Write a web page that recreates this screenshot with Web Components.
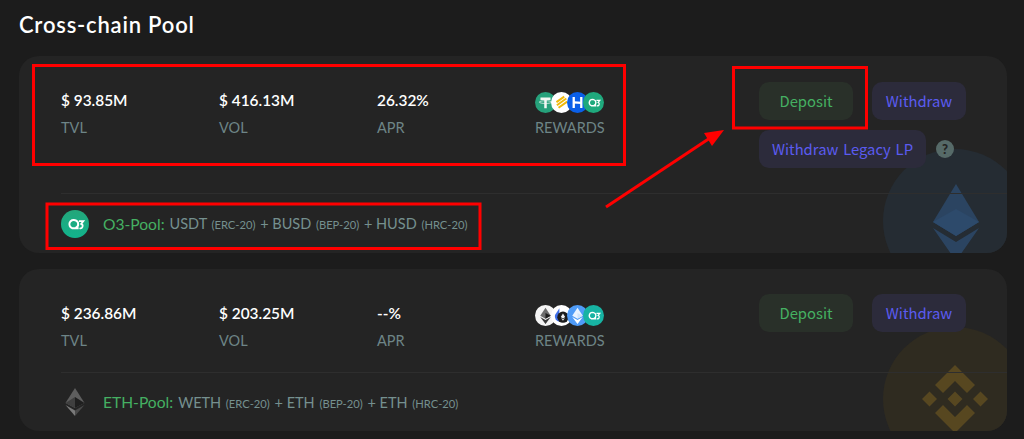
<!DOCTYPE html>
<html>
<head>
<meta charset="utf-8">
<title>Cross-chain Pool</title>
<style>
	html, body { margin: 0; padding: 0; background: #1c1c1c; }
	body { font-family: "Lato", "Noto Sans", sans-serif; width: 1024px; height: 439px; overflow: hidden; position: relative; }
</style>
</head>
<body>
<pool-page>
	<span slot="title">Cross-chain Pool</span>

	<pool-card watermark="eth">
		<pool-stat slot="stats" value="$ 93.85M" label="TVL"></pool-stat>
		<pool-stat slot="stats" value="$ 416.13M" label="VOL"></pool-stat>
		<pool-stat slot="stats" value="26.32%" label="APR"></pool-stat>
		<reward-stack slot="stats" tokens="usdt busd husd o3"></reward-stack>
		<action-button slot="actions" kind="deposit">Deposit</action-button>
		<action-button slot="actions" kind="withdraw">Withdraw</action-button>
		<action-button slot="actions" kind="withdraw">Withdraw Legacy LP</action-button>
		<help-mark slot="actions"></help-mark>
		<pool-name slot="footer" icon="o3" name="O3-Pool:" parts="USDT|ERC-20,BUSD|BEP-20,HUSD|HRC-20"></pool-name>
	</pool-card>

	<pool-card watermark="bnb">
		<pool-stat slot="stats" value="$ 236.86M" label="TVL"></pool-stat>
		<pool-stat slot="stats" value="$ 203.25M" label="VOL"></pool-stat>
		<pool-stat slot="stats" value="--%" label="APR"></pool-stat>
		<reward-stack slot="stats" tokens="eth lido weth o3teal"></reward-stack>
		<action-button slot="actions" kind="deposit">Deposit</action-button>
		<action-button slot="actions" kind="withdraw">Withdraw</action-button>
		<pool-name slot="footer" icon="ethgray" name="ETH-Pool:" parts="WETH|ERC-20,ETH|BEP-20,ETH|HRC-20"></pool-name>
	</pool-card>
</pool-page>
<red-markup></red-markup>

<script>
(function() {
	// shapes shared by the small round token icons, all on a 20x20 box
	const ethShape = (top, mid, low) => `
		<path d="M10 2.5 L15 10.2 L10 13 L5 10.2 Z" fill="${top}"/>
		<path d="M10 7.5 L15 10.2 L10 13 Z" fill="${mid}"/>
		<path d="M5 11.4 L10 14.2 L15 11.4 L10 18 Z" fill="${low}"/>`;

	const o3Shape = `
		<path d="M12.6 13 H7.9 A2.9 2.9 0 1 1 10.2 7.3 A2.9 2.9 0 0 1 10.4 12.8" fill="none" stroke="#fff" stroke-width="1.4"/>
		<path d="M12.8 7.9 H16 L14.4 9.9 A1.6 1.6 0 0 1 13.2 13" fill="none" stroke="#fff" stroke-width="1.2"/>`;

	const tokens = {
		usdt: `<circle cx="10" cy="10" r="10" fill="#26a17b"/>
			<path d="M5.2 5.2 H14.8 V7.6 H11.2 V15.5 H8.8 V7.6 H5.2 Z" fill="#f1f7f3"/>
			<ellipse cx="10" cy="9.6" rx="6" ry="1.3" fill="none" stroke="#f1f7f3" stroke-width=".7"/>`,
		busd: `<circle cx="10" cy="10" r="10" fill="#fff"/>
			<g stroke="#f0b90b" stroke-width="1.9" fill="none">
				<path d="M5.2 9.6 L12.6 4.4 M5.6 12.6 L14.6 6.2 M7.2 15 L15.4 9.2"/>
			</g>`,
		husd: `<circle cx="10" cy="10" r="10" fill="#0a5fe8"/>
			<path d="M6.4 4.8 V15.2 M13.6 4.8 V15.2" stroke="#fff" stroke-width="2.2" fill="none"/>
			<path d="M6.4 9.8 L13.6 10.4" stroke="#fff" stroke-width="2.2" fill="none"/>`,
		o3: `<circle cx="10" cy="10" r="10" fill="#1fa97d"/>${o3Shape}`,
		o3teal: `<circle cx="10" cy="10" r="10" fill="#17b3a3"/>${o3Shape}`,
		eth: `<circle cx="10" cy="10" r="10" fill="#f4f4f4"/>${ethShape("#6d6d6d", "#1d1d1d", "#3a3a3a")}`,
		lido: `<circle cx="10" cy="10" r="10" fill="#fff"/>
			<path d="M8 3 L3.8 9.6 A5.2 5.2 0 0 0 8 16 Z" fill="#3f6fe8"/>
			<circle cx="11.4" cy="11.6" r="5.4" fill="#1c1c1c"/>
			<path d="M11.4 8.2 L13.5 11.5 L11.4 12.8 L9.3 11.5 Z M9.5 12.3 L11.4 13.6 L13.3 12.3 L11.4 15 Z" fill="#eee"/>`,
		weth: `<circle cx="10" cy="10" r="10" fill="#4f9bf7"/>${ethShape("#eaf3ff", "#cfe3fb", "#fff")}`
	};

	let pageTemplate = document.createElement("template");
	pageTemplate.innerHTML = `
		<style>
			:host { display: block; padding: 0 17px 0 19px; }
			h1 { margin: 0; height: 56px; box-sizing: border-box; padding-top: 11px; font-size: 22px; letter-spacing: .8px; line-height: 28px; font-weight: 600; color: #fff; }
			.list { display: flex; flex-direction: column; gap: 16px; }
		</style>
		<h1><slot name="title"></slot></h1>
		<div class="list"><slot></slot></div>
	`;

	class PoolPage extends HTMLElement {
		constructor() {
			super();
			this.attachShadow({mode: "open"}).appendChild(pageTemplate.content.cloneNode(true));
		}
	}

	const watermarks = {
		eth: `<svg viewBox="0 0 144 144" width="144" height="144">
				<circle cx="72" cy="72" r="72" fill="#252c33"/>
				<path d="M73 35 L96 73 L73 87 L50 73 Z" fill="#2b4461"/>
				<path d="M73 60 L96 73 L73 87 L50 73 Z" fill="#2d4a6b"/>
				<path d="M50 79 L73 93 L96 79 L73 112 Z" fill="#2b4461"/>
			</svg>`,
		bnb: `<svg viewBox="0 0 144 144" width="144" height="144">
				<circle cx="72" cy="72" r="72" fill="#2f2b20"/>
				<g fill="#574720">
					<path d="M72 38 L92 58 L84 66 L72 54 L60 66 L52 58 Z"/>
					<path d="M72 106 L92 86 L84 78 L72 90 L60 78 L52 86 Z"/>
					<path d="M72 64.5 L79.5 72 L72 79.5 L64.5 72 Z"/>
					<path d="M46.5 64.5 L54 72 L46.5 79.5 L39 72 Z"/>
					<path d="M97.5 64.5 L105 72 L97.5 79.5 L90 72 Z"/>
				</g>
			</svg>`
	};

	let cardTemplate = document.createElement("template");
	cardTemplate.innerHTML = `
		<style>
			:host { display: block; position: relative; overflow: hidden; background: #242424; border-radius: 20px; }
			.mark { position: absolute; right: -20px; bottom: -40px; width: 144px; height: 144px; }
			.inner { position: relative; }
			.top { display: flex; justify-content: space-between; align-items: flex-start; box-sizing: border-box; min-height: 103px; padding: 25px 41px 0 42px; }
			.stats { display: flex; }
			.actions { display: flex; flex-wrap: wrap; align-items: center; gap: 10px 19px; width: 207px; padding-bottom: 25px; }
			:host([watermark="eth"]) .actions { margin-top: 1px; }
			.line { height: 1px; margin-left: 42px; background: #2e2e2e; }
			.foot { display: flex; align-items: center; height: 58px; padding-left: 42px; }
			:host([watermark="eth"]) .foot { height: 59px; }
		</style>
		<div class="mark"></div>
		<div class="inner">
			<div class="top">
				<div class="stats"><slot name="stats"></slot></div>
				<div class="actions"><slot name="actions"></slot></div>
			</div>
			<div class="line"></div>
			<div class="foot"><slot name="footer"></slot></div>
		</div>
	`;

	class PoolCard extends HTMLElement {
		constructor() {
			super();
			this._shadowRoot = this.attachShadow({mode: "open"});
			this._shadowRoot.appendChild(cardTemplate.content.cloneNode(true));
		}
		connectedCallback() {
			this._shadowRoot.querySelector(".mark").innerHTML = watermarks[this.getAttribute("watermark")];
		}
	}

	let statTemplate = document.createElement("template");
	statTemplate.innerHTML = `
		<style>
			:host { display: block; width: 158px; }
			.value { height: 38px; padding-top: 9px; box-sizing: border-box; font-size: 15.4px; line-height: 20px; font-weight: 600; color: #fff; }
			.label { font-size: 14.5px; line-height: 18px; color: #6e8587; }
		</style>
		<div class="value"></div>
		<div class="label"></div>
	`;

	class PoolStat extends HTMLElement {
		constructor() {
			super();
			this._shadowRoot = this.attachShadow({mode: "open"});
			this._shadowRoot.appendChild(statTemplate.content.cloneNode(true));
		}
		connectedCallback() {
			this._shadowRoot.querySelector(".value").textContent = this.getAttribute("value");
			this._shadowRoot.querySelector(".label").textContent = this.getAttribute("label");
		}
	}

	let rewardTemplate = document.createElement("template");
	rewardTemplate.innerHTML = `
		<style>
			:host { display: block; }
			.icons { display: flex; height: 38px; padding-top: 11px; box-sizing: border-box; }
			svg { width: 21px; height: 21px; flex: none; margin-right: -5px; }
			.label { font-size: 14.5px; line-height: 18px; color: #6e8587; }
		</style>
		<div class="icons"></div>
		<div class="label">REWARDS</div>
	`;

	class RewardStack extends HTMLElement {
		constructor() {
			super();
			this._shadowRoot = this.attachShadow({mode: "open"});
			this._shadowRoot.appendChild(rewardTemplate.content.cloneNode(true));
		}
		connectedCallback() {
			let html = "";
			this.getAttribute("tokens").split(" ").forEach(t => {
				html += `<svg viewBox="0 0 20 20">${tokens[t]}</svg>`;
			});
			this._shadowRoot.querySelector(".icons").innerHTML = html;
		}
	}

	let buttonTemplate = document.createElement("template");
	buttonTemplate.innerHTML = `
		<style>
			:host { display: inline-flex; align-items: center; justify-content: center; box-sizing: border-box; height: 38px; min-width: 94px; padding: 0 13px 2px; border-radius: 10px; font-family: "Noto Sans CJK KR", "Noto Sans", sans-serif; font-size: 14.8px; word-spacing: 1.5px; }
			:host([kind="deposit"]) { background: #293029; color: #45b062; }
			:host([kind="withdraw"]) { background: #2c2b3b; color: #5b5bf0; }
		</style>
		<slot></slot>
	`;

	class ActionButton extends HTMLElement {
		constructor() {
			super();
			this.attachShadow({mode: "open"}).appendChild(buttonTemplate.content.cloneNode(true));
		}
	}

	let helpTemplate = document.createElement("template");
	helpTemplate.innerHTML = `
		<style>
			:host { display: block; width: 18px; height: 18px; margin-left: -9px; border-radius: 50%; background: #566a68; color: #232323; font-size: 13px; font-weight: 900; line-height: 18px; text-align: center; }
		</style>
		?
	`;

	class HelpMark extends HTMLElement {
		constructor() {
			super();
			this.attachShadow({mode: "open"}).appendChild(helpTemplate.content.cloneNode(true));
		}
	}

	let nameTemplate = document.createElement("template");
	nameTemplate.innerHTML = `
		<style>
			:host { display: flex; align-items: center; font-size: 14.5px; color: #75908f; }
			.icon { width: 42px; flex: none; display: flex; }
			.icon svg { width: 28px; height: 28px; }
			b { font-weight: 400; color: #45b062; margin-right: 5px; font-size: 15.6px; }
			small { font-size: 11.2px; margin: 0 1px 0 1px; }
		</style>
		<span class="icon"></span>
		<b></b>
		<span class="parts"></span>
	`;

	class PoolName extends HTMLElement {
		constructor() {
			super();
			this._shadowRoot = this.attachShadow({mode: "open"});
			this._shadowRoot.appendChild(nameTemplate.content.cloneNode(true));
		}
		connectedCallback() {
			let icon = this.getAttribute("icon");
			let icons = {
				o3: `<svg viewBox="0 0 20 20"><defs><linearGradient id="g" x1="0" y1="0" x2="0" y2="1"><stop offset="0" stop-color="#23a67a"/><stop offset="1" stop-color="#12b38c"/></linearGradient></defs><circle cx="10" cy="10" r="10" fill="url(#g)"/>${o3Shape}</svg>`,
				ethgray: `<svg viewBox="0 0 28 28"><path d="M14 0 L23.5 15 L14 20 L4.5 15 Z" fill="#5e5e5e"/><path d="M14 9 L23.5 15 L14 20 Z" fill="#1f1f1f"/><path d="M14 9 L4.5 15 L14 20 Z" fill="#3f3f3f"/><path d="M4.5 17 L14 22.5 L14 28 Z" fill="#7a7a7a"/><path d="M23.5 17 L14 22.5 L14 28 Z" fill="#4a4a4a"/></svg>`
			};
			this._shadowRoot.querySelector(".icon").innerHTML = icons[icon];
			this._shadowRoot.querySelector("b").textContent = this.getAttribute("name");
			let parts = this.getAttribute("parts").split(",").map(p => {
				let bits = p.split("|");
				return `${bits[0]} <small>(${bits[1]})</small>`;
			});
			this._shadowRoot.querySelector(".parts").innerHTML = parts.join(" + ");
		}
	}

	// the red notes someone drew on top of the screenshot
	let markupTemplate = document.createElement("template");
	markupTemplate.innerHTML = `
		<style>
			:host { display: block; position: absolute; left: 0; top: 0; width: 1024px; height: 439px; pointer-events: none; }
			svg { display: block; }
		</style>
		<svg width="1024" height="439" viewBox="0 0 1024 439" fill="none" stroke="#f00" stroke-width="3">
			<rect x="33.5" y="65.5" width="591" height="99"/>
			<rect x="733.5" y="67.5" width="133" height="60.5"/>
			<rect x="47" y="204" width="433" height="44.5"/>
			<path d="M606 207 L710 138"/>
			<path d="M724 130 L704 133 L712 146 Z" fill="#f00" stroke="none"/>
		</svg>
	`;

	class RedMarkup extends HTMLElement {
		constructor() {
			super();
			this.attachShadow({mode: "open"}).appendChild(markupTemplate.content.cloneNode(true));
		}
	}

	customElements.define("pool-page", PoolPage);
	customElements.define("pool-card", PoolCard);
	customElements.define("pool-stat", PoolStat);
	customElements.define("reward-stack", RewardStack);
	customElements.define("action-button", ActionButton);
	customElements.define("help-mark", HelpMark);
	customElements.define("pool-name", PoolName);
	customElements.define("red-markup", RedMarkup);
})();
</script>
</body>
</html>
